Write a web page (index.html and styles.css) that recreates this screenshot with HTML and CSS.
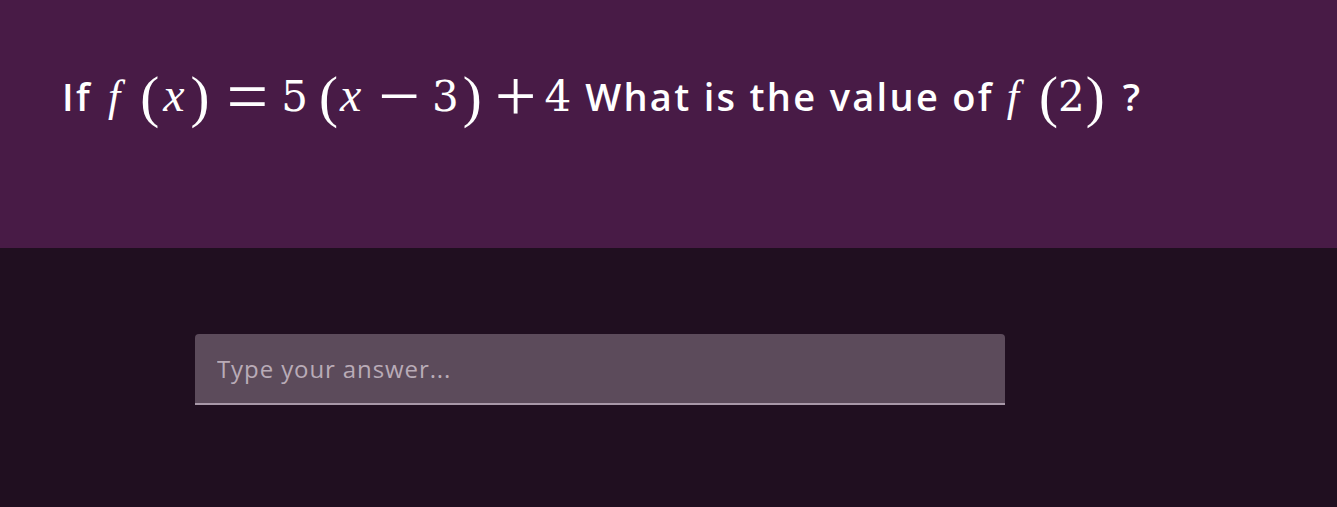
FILE: index.html
```html
<!DOCTYPE html>
<html lang="en">
<head>
    <meta charset="UTF-8">
    <meta name="viewport" content="width=device-width, initial-scale=1.0">
    <title>Question</title>
    <link rel="stylesheet" href="styles.css">
</head>
<body>
    <div class="question-container">
        <p class="question">If<span class="math first"><i class="fn">f</i><span class="paren p1">(</span><i class="var x1">x</i><span class="paren p2">)</span><span class="op eq">=</span><span class="num n5">5</span><span class="paren p3">(</span><i class="var x2">x</i><span class="op minus">&minus;</span><span class="num n3">3</span><span class="paren p4">)</span><span class="op plus">+</span><span class="num n4">4</span></span>What is the value of<span class="math second"><i class="fn">f</i><span class="paren p5">(</span><span class="num n2">2</span><span class="paren p6">)</span></span>?</p>
    </div>
    <div class="answer-container">
        <input class="answer-input" type="text" placeholder="Type your answer...">
    </div>
</body>
</html>
```

FILE: styles.css
```css
body {
    font-family: "Open Sans", "Noto Sans", sans-serif;
    margin: 0;
    padding: 0;
    background-color: #200f20;
    color: #ffffff;
}
.question-container {
    background-color: #481b46;
    height: 248px;
    padding: 0 62px;
    box-sizing: border-box;
}
.question {
    margin: 0;
    padding-top: 70px;
    font-size: 38px;
    font-weight: 600;
    letter-spacing: 2.3px;
    line-height: 52px;
    white-space: nowrap;
}

/* math parts */
.math {
    font-family: "Liberation Serif", serif;
    font-weight: normal;
    font-size: 44px;
    letter-spacing: 0;
    line-height: 0;
}
.math.first {
    margin: 0 14px 0 16px;
}
.math.second {
    margin: 0 18px 0 13px;
}
.math i {
    font-style: italic;
}
.math .var {
    font-size: 48px;
}
.math .num {
    font-family: "DejaVu Serif", serif;
    font-size: 42px;
}
.paren {
    font-size: 57px;
    line-height: 0;
    vertical-align: -5px;
}
.op {
    font-size: 74px;
    line-height: 0;
    vertical-align: -10px;
}
.p1 { margin-left: 20px; }
.x1 { margin-left: 4px; }
.p2 { margin-left: 6px; }
.eq { margin-left: 17px; }
.n5 { margin-left: 13px; }
.p3 { margin-left: 11px; }
.x2 { margin-left: 2px; }
.minus { margin-left: 17px; }
.n3 { margin-left: 12px; }
.p4 { margin-left: 4px; }
.plus { margin-left: 13px; }
.n4 { margin-left: 8px; }
.p5 { margin-left: 20px; }
.n2 { margin-left: 0; }
.p6 { margin-left: 1px; }

.answer-container {
    padding: 86px 0 0 195px;
}
.answer-input {
    display: block;
    width: 810px;
    height: 71px;
    box-sizing: border-box;
    padding: 0 22px;
    background-color: #5c4b5b;
    border: none;
    border-bottom: 2px solid #a898a8;
    border-radius: 4px 4px 0 0;
    font-family: "Open Sans", "Noto Sans", sans-serif;
    font-size: 24px;
    letter-spacing: 0.9px;
    color: #ffffff;
    outline: none;
}
.answer-input::placeholder {
    color: #b9abb7;
}
```
